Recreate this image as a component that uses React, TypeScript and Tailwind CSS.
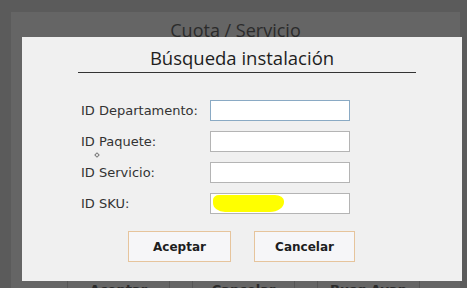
// Modal "Búsqueda instalación" shown on top of the darkened "Cuota / Servicio" window.
const fields = ["ID Departamento:", "ID Paquete:", "ID Servicio:", "ID SKU:"];

function BackButton({ label }: { label: string }) {
  return (
    <div className="w-[103px] h-[30px] border-x border-[#555] flex items-start justify-center pt-[1px] text-[13px] font-bold text-[#2a2a2a]">
      {label}
    </div>
  );
}

export default function App() {
  return (
    <div
      className="relative w-[467px] h-[288px] overflow-hidden bg-[#5b5b5b]"
      style={{ fontFamily: '"Open Sans", sans-serif' }}
    >
      {/* darkened window behind the modal */}
      <div className="ml-[11px] mt-[12px] w-[449px] h-[300px] bg-[#656565] flex flex-col">
        <div className="text-center text-[18px] leading-[26px] mt-[5px] text-[#2b2b2b]">
          Cuota / Servicio
        </div>
        <div className="mt-[236px] flex gap-[22px] pl-[56px]" style={{ fontFamily: '"DejaVu Sans", sans-serif' }}>
          <BackButton label="Aceptar" />
          <BackButton label="Cancelar" />
          <BackButton label="Busq Avan" />
        </div>
      </div>

      {/* modal */}
      <div className="absolute left-[22px] top-[37px] w-[440px] h-[244px] bg-[#f0f0f0] flex flex-col">
        <div className="text-center text-[18.5px] leading-[24px] mt-[9px] text-[#1e1e1e]">
          Búsqueda instalación
        </div>
        <div className="ml-[56px] mt-[2px] w-[338px] h-px bg-[#333]" />

        <div
          className="relative mt-[27px] ml-[59px] grid grid-cols-[129px_140px] gap-y-[10px] text-[13px] text-[#333]"
          style={{ fontFamily: '"DejaVu Sans", sans-serif' }}
        >
          {fields.map((f, i) => (
            <div key={f} className="contents">
              <div className="h-[21px] flex items-center">{f}</div>
              <div
                className={
                  "relative h-[21px] bg-white border " +
                  (i === 0 ? "border-[#8aaac4]" : "border-[#b4b4b4]")
                }
              >
                {i === 3 && (
                  <div className="absolute left-[2px] top-[1px] w-[71px] h-[17px] bg-[#ffff00] rounded-[6px_9px_14px_12px/5px_6px_10px_9px]" />
                )}
              </div>
            </div>
          ))}
          <div className="absolute left-[14px] top-[53px] w-[4px] h-[4px] rotate-45 border border-[#777]" />
        </div>

        <div
          className="mt-[17px] ml-[106px] flex gap-[23px] text-[12px] font-bold text-[#1e1e1e]"
          style={{ fontFamily: '"DejaVu Sans", sans-serif' }}
        >
          <button className="w-[103px] h-[31px] bg-[#f6f6f8] border border-[#e6c49c]">Aceptar</button>
          <button className="w-[101px] h-[31px] bg-[#f6f6f8] border border-[#e6c49c]">Cancelar</button>
        </div>
      </div>
    </div>
  );
}
